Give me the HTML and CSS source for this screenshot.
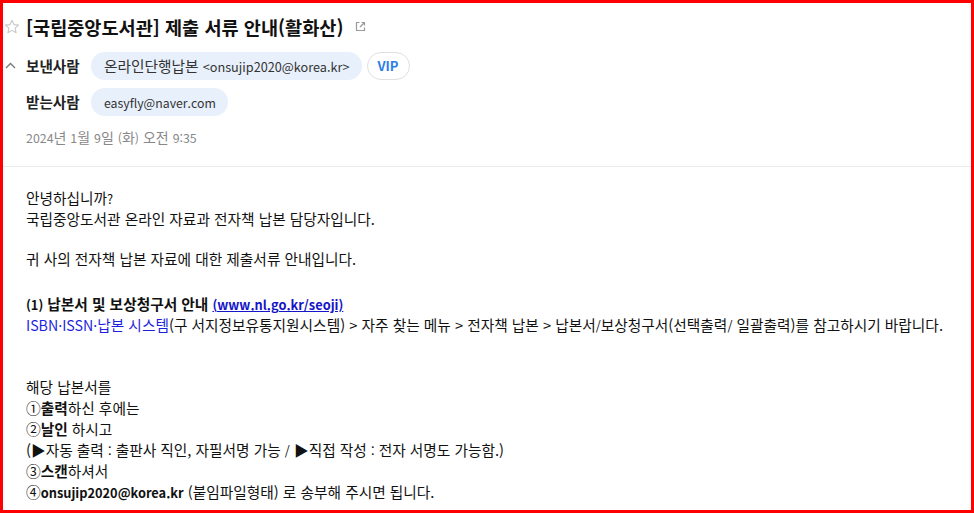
FILE: index.html
```html
<!DOCTYPE html>
<html lang="ko">
<head>
<meta charset="utf-8">
<title>메일</title>
<link rel="stylesheet" href="styles.css">
</head>
<body>
<div class="frame">
  <div class="header">
    <div class="title-row">
      <span class="gutter">
        <svg class="star" width="16" height="16" viewBox="0 0 16 16"><path d="M8 1.3 9.95 5.6 14.6 6.1 11.1 9.2 12.1 13.8 8 11.4 3.9 13.8 4.9 9.2 1.4 6.1 6.05 5.6Z" fill="none" stroke="#c9c9c9" stroke-width="1.1" stroke-linejoin="round"/></svg>
      </span>
      <h1 class="title">[국립중앙도서관] 제출 서류 안내(활화산)</h1>
      <svg class="ext" width="11" height="11" viewBox="0 0 11 11"><path d="M4.5 1.5H1.5v8h8V6.5" fill="none" stroke="#9a9a9a" stroke-width="1.2"/><path d="M6.5 1.5h3v3M9.5 1.5 5 6" fill="none" stroke="#9a9a9a" stroke-width="1.2"/></svg>
    </div>
    <div class="addr-row">
      <span class="gutter">
        <svg class="caret" width="11" height="7" viewBox="0 0 11 7"><path d="M1 6 5.5 1.5 10 6" fill="none" stroke="#777" stroke-width="1.3"/></svg>
      </span>
      <span class="label">보낸사람</span>
      <span class="chip">온라인단행납본 <span class="en-h">&lt;onsujip2020@korea.kr&gt;</span></span>
      <span class="vip">VIP</span>
    </div>
    <div class="addr-row">
      <span class="gutter"></span>
      <span class="label">받는사람</span>
      <span class="chip"><span class="en-h2">easyfly@naver.com</span></span>
    </div>
    <div class="date"><span class="en-d">2024</span>년 <span class="en-d">1</span>월 <span class="en-d">9</span>일 <span class="en-d">(</span>화<span class="en-d">)</span> 오전 <span class="en-d">9:35</span></div>
  </div>
  <div class="content">
    <div class="line">안녕하십니까<span class="en">?</span></div>
    <div class="line">국립중앙도서관 온라인 자료과 전자책 납본 담당자입니다.</div>
    <div class="gap1"></div>
    <div class="line">귀 사의 전자책 납본 자료에 대한 제출서류 안내입니다.</div>
    <div class="gap2"></div>
    <div class="line"><b><span class="en">(1)</span> 납본서 및 보상청구서 안내 <a class="link en" href="#">(www.nl.go.kr/seoji)</a></b></div>
    <div class="line"><span class="blue"><span class="caps">ISBN·ISSN·</span>납본 시스템</span>(구 서지정보유통지원시스템) &gt; 자주 찾는 메뉴 &gt; 전자책 납본 &gt; 납본서<span class="en">/</span>보상청구서(선택출력<span class="en">/</span> 일괄출력)를 참고하시기 바랍니다.</div>
    <div class="gap3"></div>
    <div class="line">해당 납본서를</div>
    <div class="line">①<b>출력</b>하신 후에는</div>
    <div class="line">②<b>날인</b> 하시고</div>
    <div class="line">(▶자동 출력 <span class="en">:</span> 출판사 직인, 자필서명 가능 <span class="en">/</span> ▶직접 작성 <span class="en">:</span> 전자 서명도 가능함.)</div>
    <div class="line">③<b>스캔</b>하셔서</div>
    <div class="line">④<b class="en">onsujip2020@korea.kr</b> (붙임파일형태) 로 송부해 주시면 됩니다.</div>
  </div>
</div>
</body>
</html>
```

FILE: styles.css
```css
html, body {
  margin: 0;
  padding: 0;
  background: #fff;
}
body {
  font-family: "Noto Sans CJK KR", "Noto Sans", sans-serif;
  color: #111;
}
.frame {
  width: 974px;
  height: 513px;
  box-sizing: border-box;
  border: 3px solid #ff0000;
  overflow: hidden;
  background: #fff;
}
.header {
  padding-top: 9px;
  padding-bottom: 19px;
  border-bottom: 1px solid #ebebeb;
}
.gutter {
  width: 23px;
  flex: none;
  display: flex;
  align-items: center;
}
.title-row {
  display: flex;
  align-items: center;
  height: 30px;
}
.star {
  margin-left: 1px;
}
.title {
  margin: 0;
  font-size: 18.6px;
  font-weight: 700;
  color: #111;
  line-height: 30px;
}
.ext {
  margin-left: 12px;
  margin-top: -2px;
}
.addr-row {
  display: flex;
  align-items: center;
  height: 28px;
  margin-top: 8px;
}
.title-row + .addr-row {
  margin-top: 10px;
}
.caret {
  margin-left: 2px;
  margin-top: -2px;
}
.label {
  width: 65px;
  flex: none;
  font-size: 14.6px;
  font-weight: 700;
  color: #222;
  line-height: 28px;
}
.chip {
  height: 28px;
  line-height: 28px;
  padding: 0 12px 0 13px;
  border-radius: 14px;
  background: #e7f0fb;
  font-size: 14.7px;
  color: #333;
  white-space: nowrap;
}
.en-h {
  font-size: 12.7px;
}
.en-h2 {
  font-size: 12.3px;
}
.vip {
  margin-left: 5px;
  height: 26px;
  line-height: 26px;
  padding: 0 10px;
  border: 1px solid #e0e0e0;
  border-radius: 14px;
  font-size: 13px;
  font-weight: 700;
  color: #2b7de9;
}
.date {
  margin-top: 11px;
  padding-left: 23px;
  font-size: 14px;
  line-height: 20px;
  height: 20px;
  color: #888;
}
.en-d {
  font-size: 12.4px;
}
.content {
  padding: 20px 0 0 23px;
  font-size: 14.7px;
  color: #111;
}
.line {
  line-height: 21px;
  height: 21px;
  white-space: nowrap;
}
.en {
  font-size: 12.8px;
}
.caps {
  font-size: 14.2px;
}
.gap1 { height: 19px; }
.gap2 { height: 24px; }
.gap3 { height: 41px; }
.link {
  color: #1515c8;
  text-decoration: underline;
}
.blue {
  color: #1f1fe0;
}
b {
  font-weight: 700;
}
```
